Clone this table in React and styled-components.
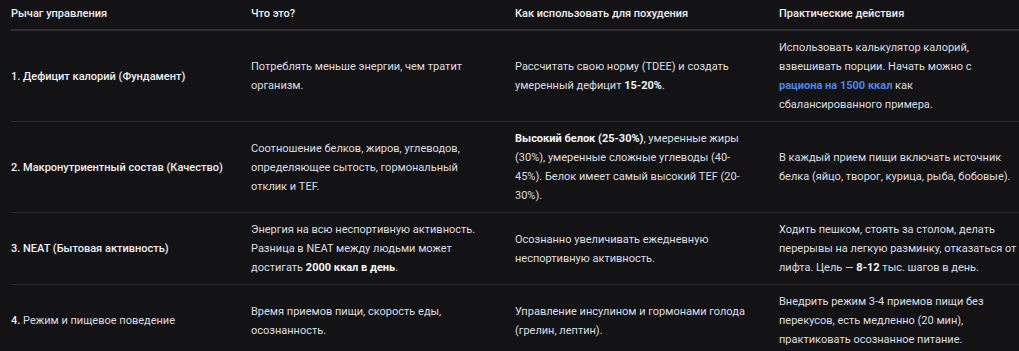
import React from "react";
import styled, { createGlobalStyle } from "styled-components";

const GlobalStyle = createGlobalStyle`
  html, body {
    margin: 0;
    padding: 0;
    background: #131316;
    overflow: hidden;
  }
  body {
    font-family: Roboto, "Noto Sans", "Liberation Sans", sans-serif;
    color: #dedee0;
  }
`;

const Wrap = styled.div`
  padding: 0 0 0 11px;
  width: 1008px;
`;

const Table = styled.table`
  border-collapse: collapse;
  table-layout: fixed;
  width: 1008px;
  font-size: 11px;
  line-height: 19px;
  col.c1 { width: 240px; }
  col.c2 { width: 264px; }
  col.c3 { width: 264px; }
  col.c4 { width: 240px; }
`;

const HeadCell = styled.th`
  text-align: left;
  font-weight: 500;
  color: #efeff1;
  padding: 4px ${(p) => p.$pr || 0}px 6px 0;
  border-bottom: 2px solid #323236;
  vertical-align: middle;
`;

const Row = styled.tr`
  border-bottom: 1px solid #2c2c30;
  &:last-child {
    border-bottom: none;
  }
`;

const Cell = styled.td`
  padding: 7px ${(p) => p.$pr || 0}px 7px 0;
  vertical-align: middle;
  font-weight: ${(p) => (p.$lead ? 500 : 400)};
  color: ${(p) => (p.$lead ? "#efeff1" : "#dedee0")};
`;

const B = styled.b`
  font-weight: 700;
  color: #f4f4f6;
`;

const Plain = styled.span`
  font-weight: 400;
  color: #dedee0;
`;

const Link = styled.a`
  color: #4a86e8;
  font-weight: 700;
  text-decoration: none;
`;

const rows = [
  {
    lever: "1. Дефицит калорий (Фундамент)",
    what: "Потреблять меньше энергии, чем тратит организм.",
    how: (
      <>
        Рассчитать свою норму (TDEE) и создать умеренный дефицит <B>15-20%</B>.
      </>
    ),
    act: (
      <>
        Использовать калькулятор калорий, взвешивать порции. Начать можно с{" "}
        <Link href="#">рациона&nbsp;на 1500 ккал</Link> как сбалансированного&nbsp;примера.
      </>
    ),
  },
  {
    lever: "2. Макронутриентный состав (Качество)",
    what: "Соотношение белков, жиров, углеводов, определяющее сытость, гормональный отклик и TEF.",
    how: (
      <>
        <B>Высокий белок (25-30%)</B>, умеренные жиры (30%), умеренные сложные углеводы
        (40-45%). Белок имеет самый высокий TEF (20-30%).
      </>
    ),
    act: "В каждый прием пищи включать источник белка (яйцо, творог, курица, рыба, бобовые).",
  },
  {
    lever: "3. NEAT (Бытовая активность)",
    what: (
      <>
        Энергия на всю неспортивную активность. Разница в NEAT между людьми может
        достигать <B>2000 ккал в день</B>.
      </>
    ),
    how: "Осознанно увеличивать ежедневную неспортивную активность.",
    act: (
      <>
        Ходить пешком, стоять за столом, делать перерывы на легкую разминку, отказаться от
        лифта. Цель — <B>8-12</B> тыс. шагов в день.
      </>
    ),
  },
  {
    lever: (
      <>
        4. <Plain>Режим и пищевое поведение</Plain>
      </>
    ),
    what: "Время приемов пищи, скорость еды, осознанность.",
    how: "Управление инсулином и гормонами голода (грелин, лептин).",
    act: "Внедрить режим 3-4 приемов пищи без перекусов, есть медленно (20 мин), практиковать осознанное питание.",
  },
];

export default function App() {
  return (
    <>
      <GlobalStyle />
      <Wrap>
        <Table>
          <colgroup>
            <col className="c1" />
            <col className="c2" />
            <col className="c3" />
            <col className="c4" />
          </colgroup>
          <thead>
            <tr>
              <HeadCell $pr={16}>Рычаг управления</HeadCell>
              <HeadCell $pr={38}>Что это?</HeadCell>
              <HeadCell $pr={30}>Как использовать для похудения</HeadCell>
              <HeadCell>Практические действия</HeadCell>
            </tr>
          </thead>
          <tbody>
            {rows.map((r, i) => (
              <Row key={i}>
                <Cell $lead $pr={16}>{r.lever}</Cell>
                <Cell $pr={38}>{r.what}</Cell>
                <Cell $pr={30}>{r.how}</Cell>
                <Cell>{r.act}</Cell>
              </Row>
            ))}
          </tbody>
        </Table>
      </Wrap>
    </>
  );
}
